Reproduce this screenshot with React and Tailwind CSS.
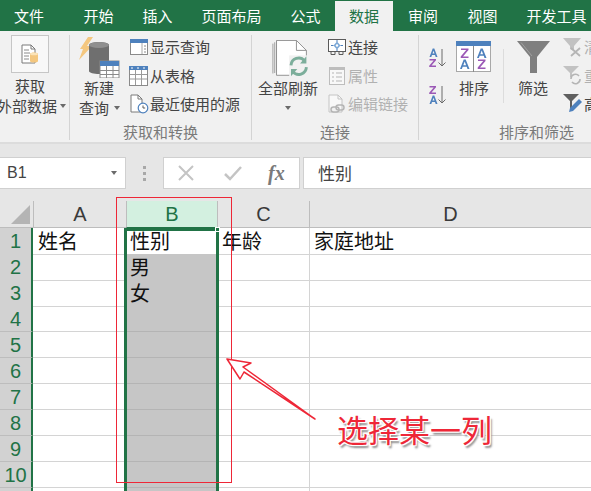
const Tab = ({ children, w, active }) => (
  <div className={`flex h-[28px] shrink-0 items-center justify-center text-[15px] leading-[20px] ${w} ${active ? "mt-[1px] self-start bg-[#f1f1f1] h-[30px] text-[#217346]" : "text-white"}`}>{children}</div>
);

const IconDoc = () => (
  <svg width="18" height="20" viewBox="0 0 18 20" className="block">
    <path d="M1 1h9l4 4v14H1z" fill="#fff" stroke="#7a7a7a" />
    <path d="M10 1v4h4" fill="none" stroke="#7a7a7a" />
    <path d="M3 6h5M3 9h6M3 12h5M3 15h5" stroke="#8a8a8a" />
    <path d="M9 10c0-2 8-2 8 0v7c0 2-8 2-8 0z" fill="#f4c77f" />
    <ellipse cx="13" cy="10" rx="4" ry="1.3" fill="#fbe3b8" />
  </svg>
);

const IconQuery = () => (
  <svg width="41" height="41" viewBox="0 0 41 41" className="block">
    <path d="M9 0h5l-6 9h5L0 23l4-11H1z" fill="#f4c77f" />
    <path d="M10 8c0-4 20-4 20 0v26c0 4-20 4-20 0z" fill="#6f6f6f" />
    <ellipse cx="20" cy="8" rx="10" ry="3" fill="#8f8f8f" />
    <rect x="21" y="24" width="19" height="17" fill="#fff" stroke="#8a8a8a" />
    <rect x="21" y="24" width="19" height="5" fill="#4e81bd" />
    <path d="M27.5 29v12M34 29v12M21 33.5h19M21 37.5h19" stroke="#8a8a8a" />
  </svg>
);

const IconShow = () => (
  <svg width="18" height="16" viewBox="0 0 18 16" className="block">
    <rect x=".5" y=".5" width="17" height="15" fill="#fff" stroke="#8a8a8a" />
    <rect x="0" y="0" width="18" height="4" fill="#4e81bd" />
    <path d="M12 4v11" stroke="#a8a8a8" />
    <path d="M14 7h2M14 10h2M14 13h2" stroke="#8a8a8a" />
  </svg>
);

const IconTable = () => (
  <svg width="19" height="20" viewBox="0 0 19 20" className="block">
    <rect x=".5" y=".5" width="18" height="19" fill="#fff" stroke="#8a8a8a" />
    <rect x="0" y="0" width="19" height="4" fill="#4e81bd" />
    <path d="M3 1v2M9 1v2M15 1v2" stroke="#fff" />
    <path d="M6.5 4v15M12.5 4v15M1 8.5h17M1 13h17" stroke="#9a9a9a" />
  </svg>
);

const IconRecent = () => (
  <svg width="20" height="20" viewBox="0 0 20 20" className="block">
    <path d="M2 1h7l4 4v13H2z" fill="#fff" stroke="#7a7a7a" />
    <path d="M9 1v4h4" fill="none" stroke="#7a7a7a" />
    <circle cx="14" cy="14" r="4.8" fill="#fff" stroke="#4e81bd" strokeWidth="1.2" />
    <path d="M14 11.5V14h2.2" fill="none" stroke="#5a5a5a" />
  </svg>
);

const IconRefresh = () => (
  <svg width="38" height="38" viewBox="0 0 42 42" className="block">
    <path d="M1 4v33M3 2.500v34M5 1v34" stroke="#9a9a9a" fill="none" />
    <path d="M5 .5h22l11 11V39H5z" fill="#fff" stroke="#8a8a8a" />
    <path d="M27 .5v11h11" fill="none" stroke="#8a8a8a" />
    <rect x="19" y="17" width="23" height="25" fill="#f1f1f1" />
    <path d="M21 28a8.5 8.5 0 0 1 15-5" fill="none" stroke="#7cae9b" strokeWidth="3.2" />
    <path d="M38 18v8h-7z" fill="#7cae9b" />
    <path d="M38 30a8.5 8.5 0 0 1-15 5" fill="none" stroke="#7cae9b" strokeWidth="3.2" />
    <path d="M21 40v-8h7z" fill="#7cae9b" />
  </svg>
);

const IconConnect = () => (
  <svg width="18" height="16" viewBox="0 0 18 16" className="block">
    <rect x=".5" y=".5" width="17" height="12" fill="#fff" stroke="#5a5a5a" />
    <path d="M3 13v2.500h4V13M11 13v2.500h4V13" fill="none" stroke="#5a5a5a" />
    <path d="M9 2.500 12.500 6.500 9 10.500 5.500 6.500z" fill="#7aa7d6" />
    <circle cx="9" cy="6.500" r="1.200" fill="#fff" />
    <path d="M9 1v2M9 10v2M3 6.500h2.500M12.500 6.500H15" stroke="#4e81bd" />
  </svg>
);

const IconProps = () => (
  <svg width="16" height="18" viewBox="0 0 16 18" className="block">
    <rect x=".5" y=".5" width="15" height="17" fill="#f8f8f8" stroke="#bdbdbd" />
    <rect x="0" y="0" width="16" height="3" fill="#bdbdbd" />
    <path d="M3 6h2M3 10h2M3 14h2M7 6h6M7 10h6M7 14h6" stroke="#b5b5b5" />
  </svg>
);

const IconLinks = () => (
  <svg width="18" height="20" viewBox="0 0 18 20" className="block">
    <path d="M1 1h9l4 4v13H1z" fill="#f8f8f8" stroke="#c4c4c4" />
    <path d="M10 1v4h4" fill="none" stroke="#c4c4c4" />
    <rect x="3" y="13" width="8" height="5" rx="2.500" fill="#f1f1f1" stroke="#b5b5b5" strokeWidth="1.500" />
    <rect x="8" y="11" width="8" height="5" rx="2.500" fill="none" stroke="#b5b5b5" strokeWidth="1.500" />
  </svg>
);

const AZ = ({ flip }) => (
  <svg width="19" height="20" viewBox="0 0 19 20" className="block" role="img" aria-label={flip ? "Z to A" : "A to Z"}>
    <path d={flip ? "M1.500 1h6.500v1.300L3.500 7.500H8V9H1.200V7.700L5.700 2.500H1.500z" : "M4.700 0.500h1.600L9.500 9H7.700L7 7H4L3.300 9H1.500zM4.500 5.600h2L5.500 2.700z"} fill={flip ? "#9b59b6" : "#4e81bd"} />
    <path d={flip ? "M4.700 10.500h1.600L9.500 19H7.700L7 17H4L3.300 19H1.500zM4.500 15.600h2L5.500 12.700z" : "M1.500 11h6.500v1.300L3.500 17.500H8V19H1.200V17.700L5.700 12.500H1.500z"} fill={flip ? "#4e81bd" : "#9b59b6"} />
    <path d="M14 1v17M10.500 14.500 14 18l3.500-3.500" fill="none" stroke="#6a6a6a" />
  </svg>
);

const IconSort = () => (
  <svg width="35" height="31" viewBox="0 0 35 31" className="block" role="img" aria-label="sort">
    <rect x=".5" y=".5" width="34" height="30" fill="#fff" stroke="#a8a8a8" />
    <rect x="0" y="0" width="35" height="5" fill="#4e81bd" />
    <path d="M17.500 5v26" stroke="#8a8a8a" />
    <path d="M5 7.500h7.500V9L7 15.500h5.500V17H4.700v-1.500L10.200 9H5z" fill="#9b59b6" />
    <path d="M7.700 18.500h2L13.500 28h-2l-.8-2.200H6.700L5.900 28H4zM7.300 24.200h2.800L8.700 20.500z" fill="#4e81bd" />
    <path d="M24.700 7.500h2L30.500 17h-2l-.8-2.200h-4L22.900 17H21zM24.300 13.200h2.800L25.700 9.500z" fill="#4e81bd" />
    <path d="M22 18.500h7.500V20L24 26.500h5.500V28h-7.800v-1.500L27.200 20H22z" fill="#9b59b6" />
  </svg>
);

const IconFilter = () => (
  <svg width="33" height="32" viewBox="0 0 33 32" className="block">
    <path d="M0 0h33L20 16v16h-7V16z" fill="#7f7f7f" />
    <path d="M4 1.500 15 15" stroke="#a0a0a0" />
  </svg>
);

const IconClear = () => (
  <svg width="19" height="19" viewBox="0 0 19 19" className="block">
    <path d="M0 0h18L11 8v5L7 11V8z" fill="#c2c2c2" />
    <path d="M8 10l9 8M17 10l-9 8" stroke="#b5b5b5" strokeWidth="1.800" />
  </svg>
);

const IconReapply = () => (
  <svg width="19" height="19" viewBox="0 0 19 19" className="block">
    <path d="M0 0h16L9 7v4H7V7z" fill="#c2c2c2" />
    <path d="M8 13a4.500 4.500 0 0 1 8-3M17 13a4.500 4.500 0 0 1-8 3" fill="none" stroke="#b5b5b5" strokeWidth="1.600" />
  </svg>
);

const IconAdvanced = () => (
  <svg width="19" height="20" viewBox="0 0 19 20" className="block">
    <path d="M0 0h16L9 7v8L7 14V7z" fill="#5f5f5f" />
    <path d="M6 18l1-4 9-9 3 3-9 9z" fill="#4e81bd" />
  </svg>
);

const Small = ({ icon, children, muted }) => (
  <div className={`flex h-[28.500px] items-center text-[15px] leading-[20px] ${muted ? "text-[#b1b1b1]" : "text-[#444444]"}`}>
    <div className="flex w-[23px] shrink-0 justify-center">{icon}</div>
    <span className="whitespace-nowrap">{children}</span>
  </div>
);

const Caret = ({ className = "" }) => (
  <span className={`inline-block h-0 w-0 border-x-[3.500px] border-t-[4px] border-x-transparent border-t-[#6a6a6a] ${className}`} />
);

const GroupLabel = ({ children }) => (
  <div className="absolute bottom-[-2px] left-0 right-0 text-center text-[15px] leading-[20px] text-[#7a7a7a]">{children}</div>
);

const Group = ({ w, border = true, children }) => (
  <div className={`relative mt-[4px] h-[105px] shrink-0 ${w} ${border ? "border-r border-[#d4d4d4]" : ""}`}>{children}</div>
);

const rows = [
  ["1", "姓名", "性别", "年龄", "家庭地址"],
  ["2", "", "男", "", ""],
  ["3", "", "女", "", ""],
  ["4", "", "", "", ""],
  ["5", "", "", "", ""],
  ["6", "", "", "", ""],
  ["7", "", "", "", ""],
  ["8", "", "", "", ""],
  ["9", "", "", "", ""],
  ["10", "", "", "", ""],
  ["", "", "", "", ""],
];

export default function App() {
  return (
    <div className="relative h-[491px] w-[591px] overflow-hidden bg-white font-['Noto_Sans_CJK_SC','Noto_Sans',sans-serif]">
      {/* Tabs */}
      <div className="flex h-[31px] items-center overflow-hidden bg-[#217346]">
        <Tab w="w-[58px] mr-[11px]">文件</Tab>
        <Tab w="w-[59px]">开始</Tab>
        <Tab w="w-[59px]">插入</Tab>
        <Tab w="w-[89px]">页面布局</Tab>
        <Tab w="w-[59px]">公式</Tab>
        <Tab w="w-[58px]" active>数据</Tab>
        <Tab w="w-[60px]">审阅</Tab>
        <Tab w="w-[59px]">视图</Tab>
        <Tab w="w-[89px]">开发工具</Tab>
      </div>

      {/* Ribbon */}
      <div className="flex h-[113px] overflow-hidden border-b-2 border-[#dcdcdc] bg-[#f1f1f1]">
        <Group w="w-[70px]">
          <div className="ml-[11px] flex h-[38px] w-[38px] items-center justify-center border border-[#c6c6c6] bg-[#f8f8f8]"><IconDoc /></div>
          <div className="mt-[3px] w-[60px] text-center text-[15px] leading-[20px] text-[#444444]">获取</div>
          <div className="ml-[-3px] flex items-center whitespace-nowrap text-[15px] leading-[20px] text-[#444444]">外部数据<Caret className="ml-[3px]" /></div>
        </Group>

        <Group w="w-[182px]">
          <div className="flex h-full">
            <div className="w-[57px] shrink-0 pl-[9px] pt-[2px]">
              <IconQuery />
              <div className="ml-[5px] text-[15px] leading-[20px] text-[#444444]">新建</div>
              <div className="flex items-center text-[15px] leading-[20px] text-[#444444]">查询<Caret className="ml-[5px]" /></div>
            </div>
            <div className="mt-[-2px] w-[125px]">
              <Small icon={<IconShow />}>显示查询</Small>
              <Small icon={<IconTable />}>从表格</Small>
              <Small icon={<IconRecent />}>最近使用的源</Small>
            </div>
          </div>
          <GroupLabel>获取和转换</GroupLabel>
        </Group>

        <Group w="w-[167px]">
          <div className="flex h-full">
            <div className="w-[73px] shrink-0 pl-[6px] pt-[5px]">
              <div className="ml-[14px]"><IconRefresh /></div>
              <div className="whitespace-nowrap text-[15px] leading-[20px] text-[#444444]">全部刷新</div>
              <div className="flex h-[20px] w-[60px] items-center justify-center"><Caret /></div>
            </div>
            <div className="mt-[-2px]">
              <Small icon={<IconConnect />}>连接</Small>
              <Small icon={<IconProps />} muted>属性</Small>
              <Small icon={<IconLinks />} muted>编辑链接</Small>
            </div>
          </div>
          <GroupLabel>连接</GroupLabel>
        </Group>

        <Group w="w-[200px]" border={false}>
          <div className="flex h-full">
            <div className="flex w-[37px] shrink-0 flex-col gap-[17px] pl-[9px] pt-[13px]">
              <AZ />
              <AZ flip />
            </div>
            <div className="flex w-[47px] shrink-0 flex-col pt-[6px]">
              <IconSort />
              <div className="mt-[6px] pl-[3px] text-[15px] leading-[20px] text-[#444444]">排序</div>
            </div>
            <div className="mt-[14px] h-[54px] w-[1px] shrink-0 bg-[#dcdcdc]" />
            <div className="flex w-[45px] shrink-0 flex-col pl-[13px] pt-[6px]">
              <IconFilter />
              <div className="mt-[5px] whitespace-nowrap pl-[1px] text-[15px] leading-[20px] text-[#444444]">筛选</div>
            </div>
            <div className="ml-[12px] mt-[-2px]">
              <Small icon={<IconClear />} muted>清除</Small>
              <Small icon={<IconReapply />} muted>重新应用</Small>
              <Small icon={<IconAdvanced />}>高级</Small>
            </div>
          </div>
          <div className="absolute bottom-[-2px] left-[80px] text-[15px] leading-[20px] text-[#7a7a7a]">排序和筛选</div>
        </Group>
      </div>

      {/* Formula bar */}
      <div className="flex h-[57px] items-start bg-[#e6e6e6] pt-[13px]">
        <div className="flex h-[32px] w-[126px] shrink-0 items-center justify-between border border-l-0 border-[#d0d0d0] bg-white pl-[7px] pr-[8px] font-['Liberation_Sans',sans-serif] text-[16px] text-[#444444]">
          B1
          <Caret />
        </div>
        <div className="flex h-[32px] w-[37px] shrink-0 flex-col items-center justify-center gap-[3px]">
          <span className="h-[3px] w-[3px] bg-[#a8a8a8]" />
          <span className="h-[3px] w-[3px] bg-[#a8a8a8]" />
          <span className="h-[3px] w-[3px] bg-[#a8a8a8]" />
        </div>
        <div className="flex h-[32px] w-[137px] shrink-0 items-center border border-[#d0d0d0] bg-white">
          <svg width="16" height="16" viewBox="0 0 16 16" className="ml-[14px] block"><path d="M1 1l14 14M15 1 1 15" stroke="#c4c4c4" strokeWidth="2" /></svg>
          <svg width="18" height="16" viewBox="0 0 18 16" className="ml-[30px] block"><path d="M1 9l5 5L17 2" fill="none" stroke="#c4c4c4" strokeWidth="2.500" /></svg>
          <span className="ml-[26px] font-['Liberation_Serif',serif] text-[20px] font-bold italic leading-none text-[#7a7a7a]">fx</span>
        </div>
        <div className="ml-[3px] flex h-[32px] flex-1 items-center border border-r-0 border-[#d0d0d0] bg-white pl-[14px] text-[17px] text-[#444444]">性别</div>
      </div>

      {/* Column headers */}
      <div className="grid h-[27px] grid-cols-[33px_93px_92px_92px_1fr] bg-[#e6e6e6] text-[20px] text-[#3a3a3a]">
        <div className="relative border-b border-[#bdbdbd]">
          <div className="absolute bottom-[3px] right-[3px] h-0 w-0 border-b-[19px] border-l-[19px] border-b-[#b4b4b4] border-l-transparent" />
        </div>
        <div className="flex items-center justify-center border-b border-l border-[#bdbdbd] font-['Liberation_Sans',sans-serif] leading-none">A</div>
        <div className="flex items-center justify-center border-x border-b border-[#bdbdbd] border-b-[#217346] bg-[#d3f0e0] font-['Liberation_Sans',sans-serif] leading-none text-[#217346]">B</div>
        <div className="flex items-center justify-center border-b border-r border-[#bdbdbd] font-['Liberation_Sans',sans-serif] leading-none">C</div>
        <div className="flex items-center justify-center border-b border-[#bdbdbd] font-['Liberation_Sans',sans-serif] leading-none">D</div>
      </div>

      {/* Rows */}
      <div className="relative h-[264px]">
        {rows.map(([n, a, b, c, d], i) => (
          <div key={i} className="grid h-[26px] grid-cols-[33px_93px_92px_92px_1fr] text-[20px] leading-[26px] text-[#111111]">
            <div className="flex items-center justify-center border-b border-r-2 border-[#bdbdbd] border-r-[#217346] bg-[#d2d2d2] font-['Liberation_Sans',sans-serif] text-[20px] leading-none text-[#217346]">{n}</div>
            <div className="whitespace-nowrap border-b border-r border-[#d4d4d4] pl-[5px]">{a}</div>
            <div className={`border-b pl-[4px] ${i === 0 ? "border-[#d4d4d4] bg-white" : "border-[#b4b4b4] bg-[#c6c6c6]"}`}>{b}</div>
            <div className="whitespace-nowrap border-b border-r border-[#d4d4d4] pl-[4px]">{c}</div>
            <div className="whitespace-nowrap border-b border-[#d4d4d4] pl-[4px]">{d}</div>
          </div>
        ))}
        {/* Selection frame */}
        <div className="pointer-events-none absolute bottom-0 left-[124px] top-0 w-[95px] border-x-[3px] border-t-[3px] border-[#217346]" />
        <div className="absolute left-[215px] top-[-1px] h-[5px] w-[5px] border border-white bg-[#217346]" />
      </div>

      {/* Annotation */}
      <div className="pointer-events-none absolute left-[116px] top-[197px] h-[286px] w-[116px] border border-[#ee2737]" />
      <svg width="591" height="491" viewBox="0 0 591 491" className="pointer-events-none absolute left-0 top-0">
        <path d="M227 359 251 363 243 367 315 419 244 372 240 379z" fill="#fff" stroke="#ee2737" strokeWidth="1.500" strokeLinejoin="round" />
      </svg>
      <div className="absolute left-[337px] top-[407px] whitespace-nowrap text-[31px] leading-[44px] text-[#ee2737] [text-shadow:1px_1px_0_#fff,-1px_-1px_0_#fff,1px_-1px_0_#fff,-1px_1px_0_#fff,2px_3px_2px_#8a8a8a]">选择某一列</div>
    </div>
  );
}
